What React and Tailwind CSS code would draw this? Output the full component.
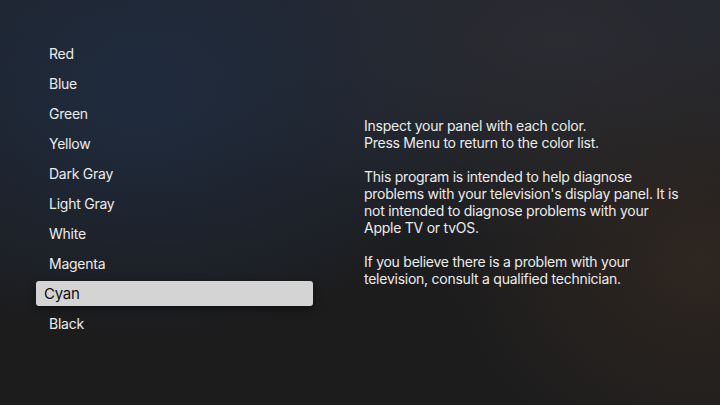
export default function App() {
  const items = ["Red", "Blue", "Green", "Yellow", "Dark Gray", "Light Gray", "White", "Magenta", "Cyan", "Black"];
  const selected = "Cyan";
  return (
    <div
      className="w-[720px] h-[405px] overflow-hidden flex bg-[#1c1c1d] bg-[radial-gradient(ellipse_340px_250px_at_140px_90px,#1f2b3e_0%,rgba(31,43,62,0)_100%),radial-gradient(ellipse_260px_220px_at_700px_260px,#2e2620_0%,rgba(46,38,32,0)_100%),radial-gradient(ellipse_420px_200px_at_560px_40px,#2b2c32_0%,rgba(43,44,50,0)_100%),linear-gradient(180deg,#1f232b_0%,#1c1c1d_75%)] tracking-[-0.25px]"
      style={{ fontFamily: 'Inter, "Liberation Sans", Arial, sans-serif' }}
    >
      <div className="w-[313px] shrink-0 pt-[38px] pl-[36px] flex flex-col">
        {items.map((it) =>
          it === selected ? (
            <div key={it} className="h-[30px] flex items-center pt-[1px]">
              <div className="h-[25px] w-full flex items-center pl-[8px] pt-[2px] rounded-[3px] bg-[#d4d4d4] shadow-[0_3px_8px_rgba(0,0,0,0.45)] text-[#111111] text-[15px]">
                {it}
              </div>
            </div>
          ) : (
            <div key={it} className="h-[30px] flex items-center pl-[13px] text-[14px] text-[#ececec]">
              {it}
            </div>
          )
        )}
      </div>
      <div className="ml-[51px] pt-[117px] text-[14px] leading-[17px] text-[#ececec] w-[340px]">
        <p>
          Inspect your panel with each color.
          <br />
          Press Menu to return to the color list.
        </p>
        <p className="mt-[17px]">
          This program is intended to help diagnose
          <br />
          problems with your television's display panel. It is
          <br />
          not intended to diagnose problems with your
          <br />
          Apple TV or tvOS.
        </p>
        <p className="mt-[17px]">
          If you believe there is a problem with your
          <br />
          television, consult a qualified technician.
        </p>
      </div>
    </div>
  );
}
